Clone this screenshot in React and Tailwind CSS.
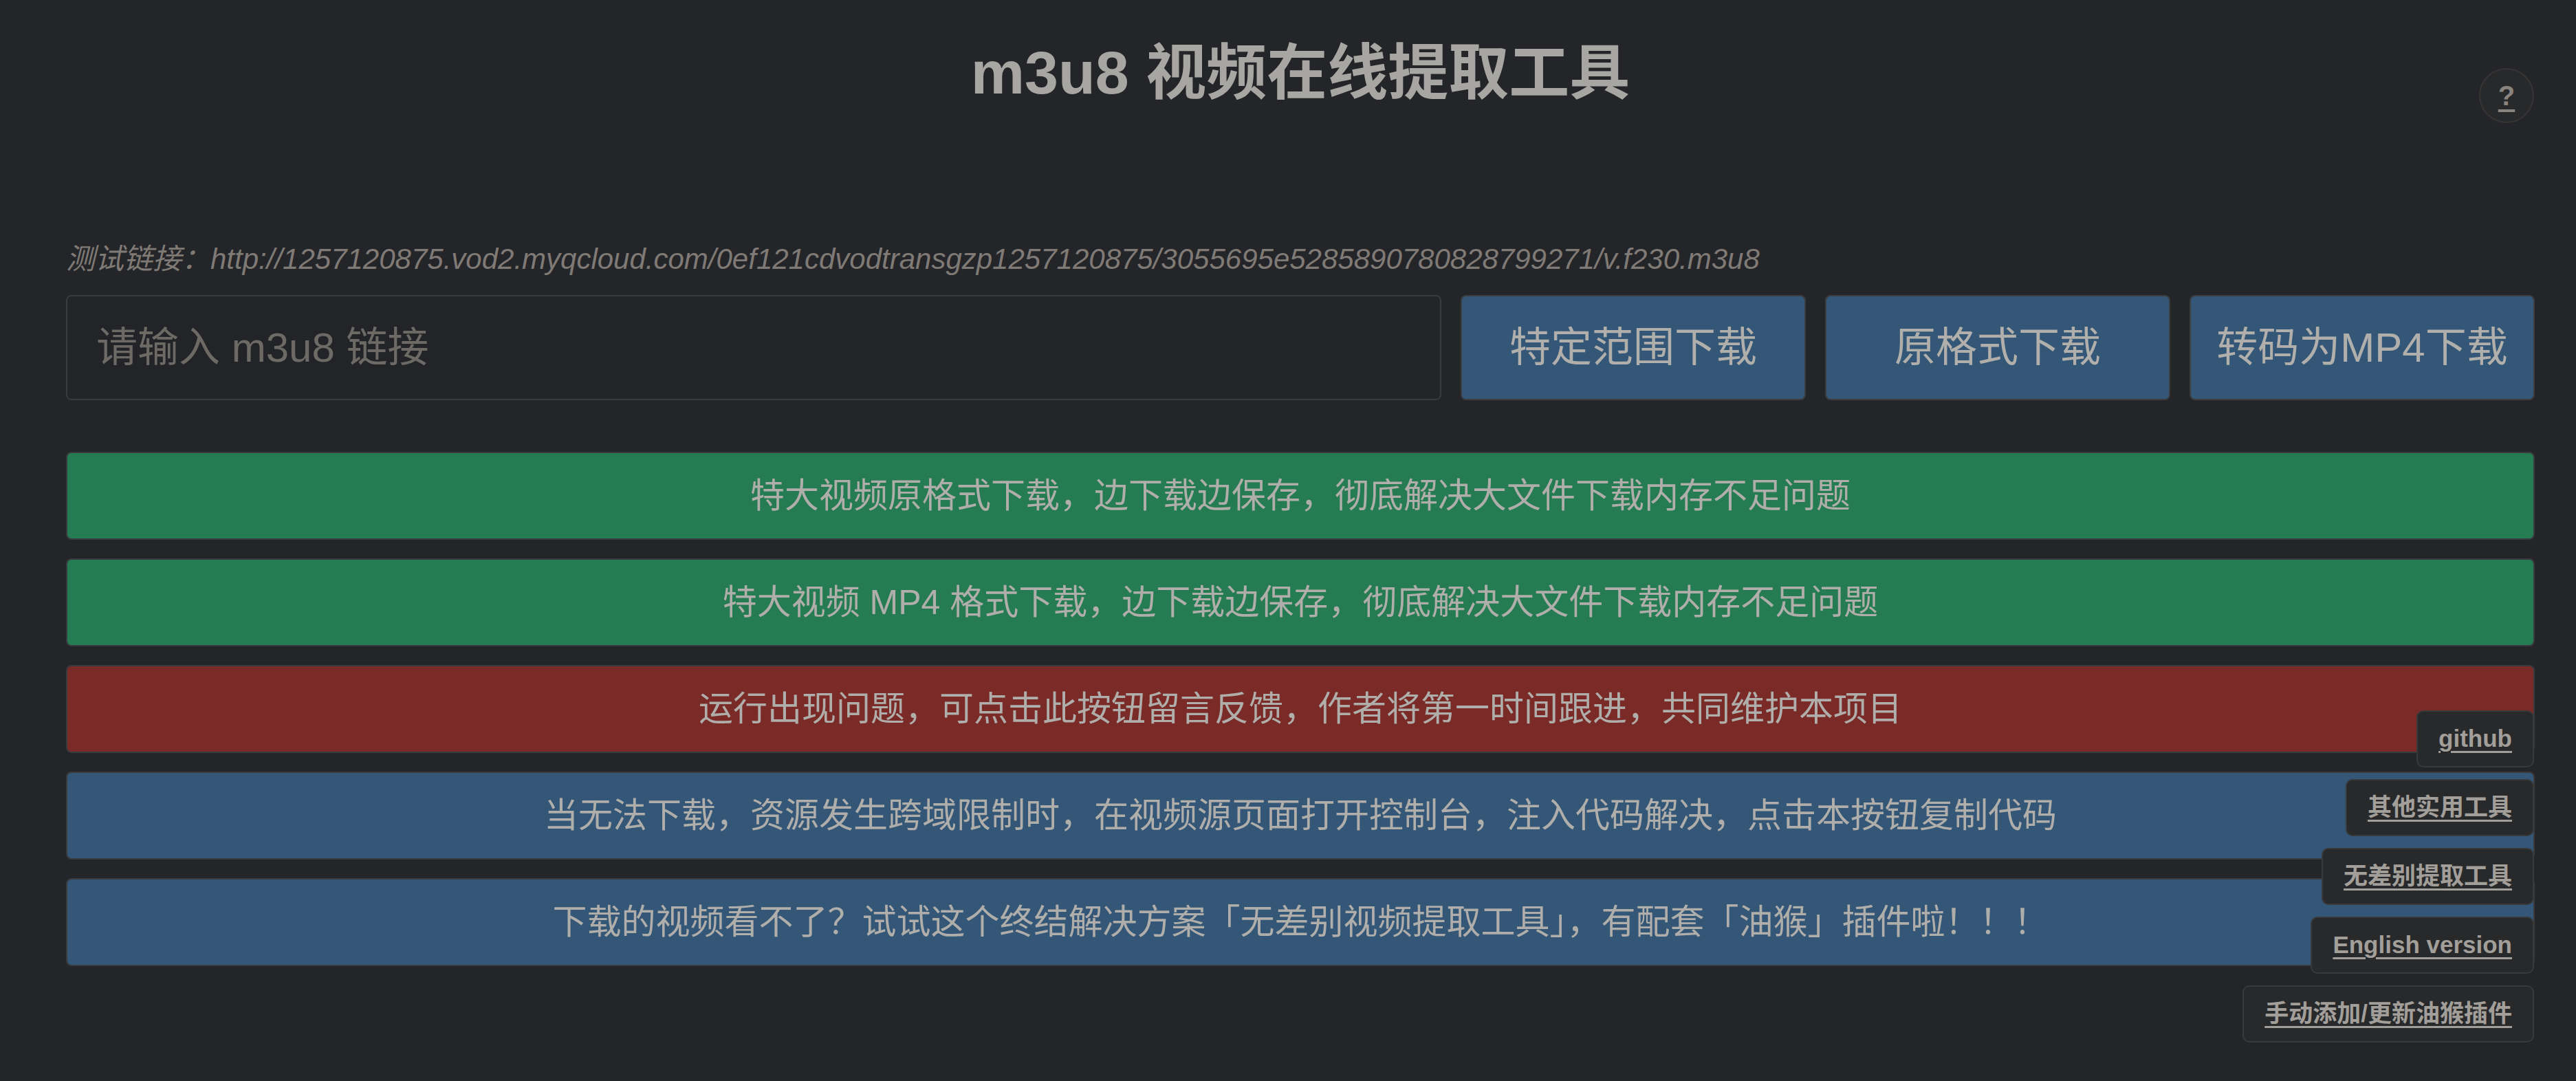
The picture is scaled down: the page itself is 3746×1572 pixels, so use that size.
import React from "react"

const banners = [
  { text: "特大视频原格式下载，边下载边保存，彻底解决大文件下载内存不足问题", bg: "bg-[#267c52]" },
  { text: "特大视频 MP4 格式下载，边下载边保存，彻底解决大文件下载内存不足问题", bg: "bg-[#267c52]" },
  { text: "运行出现问题，可点击此按钮留言反馈，作者将第一时间跟进，共同维护本项目", bg: "bg-[#7a2a27]" },
  { text: "当无法下载，资源发生跨域限制时，在视频源页面打开控制台，注入代码解决，点击本按钮复制代码", bg: "bg-[#345777]" },
  { text: "下载的视频看不了？试试这个终结解决方案「无差别视频提取工具」，有配套「油猴」插件啦！！！", bg: "bg-[#345777]" },
]

const actions = ["特定范围下载", "原格式下载", "转码为MP4下载"]

const links = ["github", "其他实用工具", "无差别提取工具", "English version", "手动添加/更新油猴插件"]

export default function App() {
  return (
    <div className="relative min-h-screen w-full bg-[#242528] pl-[96px] pr-[60px] pb-[60px] font-['Liberation_Sans','Noto_Sans_CJK_SC',sans-serif]">
      <h1 className="pt-[48px] text-center text-[88px] leading-[116px] font-bold text-[#a8a6a3]">
        m3u8 视频在线提取工具
      </h1>

      {/* help button */}
      <button className="absolute right-[61px] top-[99px] flex h-[80px] w-[80px] items-center justify-center rounded-full border-2 border-[#363534] bg-[#28292a] text-[40px] font-bold text-[#8a847e] underline decoration-[4px] underline-offset-[6px]">
        ?
      </button>

      <p className="mt-[190px] text-[42px] leading-[46px] italic text-[#7f7a75]">
        测试链接：http://1257120875.vod2.myqcloud.com/0ef121cdvodtransgzp1257120875/3055695e5285890780828799271/v.f230.m3u8
      </p>

      <div className="mt-[29px] flex h-[153px] gap-[28px]">
        <input
          placeholder="请输入 m3u8 链接"
          className="min-w-0 flex-1 rounded-[8px] border-2 border-[#3a3b3e] bg-[#232427] pl-[42px] text-[60px] text-[#aeaca8] outline-none placeholder:text-[#6d6a66]"
        />
        {actions.map((label) => (
          <button
            key={label}
            className="w-[502px] rounded-[8px] border-2 border-[#3b3d40] bg-[#345777] text-[60px] text-[#b1afab]"
          >
            {label}
          </button>
        ))}
      </div>

      <div className="mt-[75px] flex flex-col gap-[27px]">
        {banners.map((b) => (
          <button
            key={b.text}
            className={`flex h-[128px] items-center justify-center rounded-[8px] border-2 border-[#3a3b3e] text-[50px] text-[#b0aeaa] ${b.bg}`}
          >
            {b.text}
          </button>
        ))}
      </div>

      {/* floating links */}
      <div className="fixed bottom-[56px] right-[61px] flex flex-col items-end gap-[17px]">
        {links.map((l) => (
          <a
            key={l}
            href="#"
            className="flex h-[83px] items-center rounded-[10px] border-2 border-[#38393b] bg-[#28292b] px-[30px] text-[35px] font-semibold text-[#a29e99] underline decoration-[3px] underline-offset-[6px]"
          >
            {l}
          </a>
        ))}
      </div>
    </div>
  )
}
